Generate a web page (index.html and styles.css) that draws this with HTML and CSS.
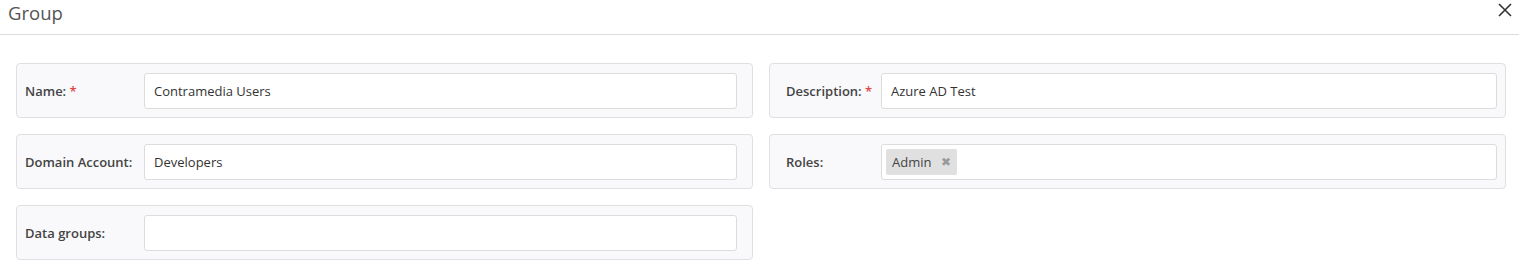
FILE: index.html
```html
<!DOCTYPE html>
<html lang="en">
<head>
  <meta charset="UTF-8">
  <title>Group</title>
  <link rel="stylesheet" href="styles.css">
</head>
<body>

  <div class="modal-header">
    <h3 class="modal-title">Group</h3>
    <button class="close-btn" title="Close">
      <svg width="14" height="14" viewBox="0 0 14 14">
        <path d="M1 1 L13 13 M13 1 L1 13" stroke="#333" stroke-width="1.6" fill="none"/>
      </svg>
    </button>
  </div>

  <div class="modal-body">
    <div class="form-grid">
      <div class="field field-left">
        <label class="field-label">Name: <span class="req">*</span></label>
        <div class="field-input">Contramedia Users</div>
      </div>
      <div class="field field-right">
        <label class="field-label">Description: <span class="req">*</span></label>
        <div class="field-input">Azure AD Test</div>
      </div>

      <div class="field field-left">
        <label class="field-label">Domain Account:</label>
        <div class="field-input">Developers</div>
      </div>
      <div class="field field-right">
        <label class="field-label">Roles:</label>
        <div class="field-input tags">
          <span class="tag">Admin <span class="tag-x">&#10006;</span></span>
        </div>
      </div>

      <div class="field field-left">
        <label class="field-label">Data groups:</label>
        <div class="field-input"></div>
      </div>
    </div>
  </div>

</body>
</html>
```

FILE: styles.css
```css
body {
  margin: 0;
  font-family: "Open Sans", "Noto Sans", Arial, sans-serif;
  font-size: 13px;
  color: #333;
  background: #fff;
}

.modal-header {
  display: flex;
  justify-content: space-between;
  align-items: flex-start;
  height: 34px;
  border-bottom: 1px solid #dcdcdc;
  padding: 0 7px 0 8px;
}
.modal-title {
  margin: 0;
  font-size: 18.5px;
  font-weight: 400;
  color: #555;
  line-height: 25px;
}
.close-btn {
  background: none;
  border: none;
  padding: 0;
  margin-top: 3px;
  cursor: pointer;
  width: 14px;
  height: 14px;
}

.modal-body {
  padding: 28px 13px 0 16px;
}
.form-grid {
  display: grid;
  grid-template-columns: 737px 737px;
  column-gap: 16px;
  row-gap: 16px;
}

.field {
  display: flex;
  align-items: center;
  height: 55px;
  box-sizing: border-box;
  border: 1px solid #e0e0e2;
  border-radius: 4px;
  background: #f9f9fb;
  padding: 8px 15px 8px 8px;
}
.field-right {
  padding-left: 16px;
  padding-right: 8px;
}
.field-label {
  flex: none;
  width: 119px;
  font-weight: 600;
  color: #444;
}
.field-right .field-label {
  width: 95px;
}
.req {
  color: #e04848;
}
.field-input {
  flex: 1;
  height: 36px;
  box-sizing: border-box;
  border: 1px solid #dcdcdc;
  border-radius: 3px;
  background: #fff;
  padding: 0 9px;
  display: flex;
  align-items: center;
  color: #333;
}
.tags {
  padding: 0 4px;
}
.tag {
  display: inline-flex;
  align-items: center;
  height: 26px;
  background: #e0e0e0;
  border-radius: 2px;
  padding: 0 6px 0 6px;
  color: #444;
}
.tag-x {
  color: #999;
  font-size: 12px;
  margin-left: 10px;
}
```
